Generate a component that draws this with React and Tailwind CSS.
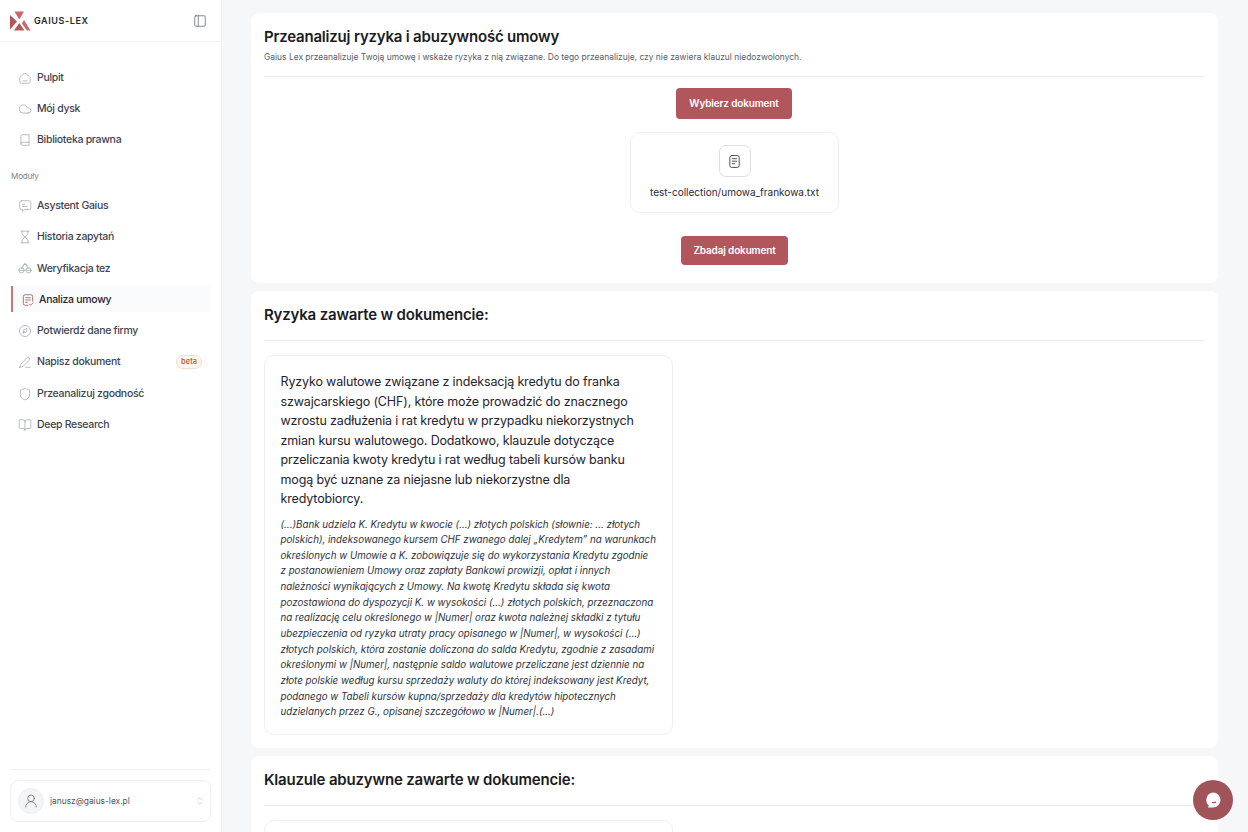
import { Cloud, Hourglass, Shield, BookOpen, PanelLeft, UserRound, ChevronsUpDown } from 'lucide-react';

const font = 'font-["Inter","Liberation_Sans",sans-serif]';

// hand-drawn nav icons, 24 grid like the icon set the app uses
function Svg({ size = 15, strokeWidth = 1.3, className, children }) {
  return (
    <svg width={size} height={size} viewBox="0 0 24 24" fill="none" stroke="currentColor" strokeWidth={strokeWidth} strokeLinecap="round" strokeLinejoin="round" className={className}>
      {children}
    </svg>
  );
}

const HomeIcon = (p) => (
  <Svg {...p}>
    <path d="M3 12.5c0-1.3.6-2.4 1.6-3.2l5-4.3a3.7 3.7 0 0 1 4.8 0l5 4.3c1 .8 1.6 1.9 1.6 3.2V18a3 3 0 0 1-3 3H6a3 3 0 0 1-3-3z" />
    <path d="M8.5 17h7" />
  </Svg>
);
const BookIcon = (p) => (
  <Svg {...p}>
    <path d="M5 18.5V6a3 3 0 0 1 3-3h11v13H7.5a2.5 2.5 0 0 0 0 5H19v-5" />
  </Svg>
);
const ChatIcon = (p) => (
  <Svg {...p}>
    <path d="M6 3h13a3 3 0 0 1 3 3v9a3 3 0 0 1-3 3h-8l-3.5 3.2V18H6a3 3 0 0 1-3-3V6a3 3 0 0 1 3-3z" />
    <path d="M7.5 9h4M7.5 13h8" />
  </Svg>
);
const BikeIcon = (p) => (
  <Svg {...p}>
    <circle cx="6" cy="16" r="4.5" />
    <circle cx="18" cy="16" r="4.5" />
    <path d="M2 16h8M14 16h8M8 7.5l4-3 4 3M6 13l6-8.5L18 13" />
  </Svg>
);
const ContractIcon = (p) => (
  <Svg {...p}>
    <path d="M12 21H7a3 3 0 0 1-3-3V6a3 3 0 0 1 3-3h10a3 3 0 0 1 3 3v8" />
    <path d="M8 8h8M8 12h8M8 16h3M14.5 19l2 2 4-4" />
  </Svg>
);
const CompassIcon = (p) => (
  <Svg {...p}>
    <circle cx="12" cy="12" r="9.5" />
    <path d="M15.5 8.5l-1.5 5.5-5.5 1.5 1.5-5.5zM8.5 15.5l3-3" />
  </Svg>
);
const PenIcon = (p) => (
  <Svg {...p}>
    <path d="M3 21c.5-2.5 1.2-5 2.8-6.6L15.5 4.8a2.8 2.8 0 0 1 4 4L9.7 18.4C8 20 5.5 20.6 3 21z" />
    <path d="M13 21h8" />
  </Svg>
);
const DocIcon = (p) => (
  <Svg {...p}>
    <rect x="4.5" y="2.5" width="15" height="19" rx="3" />
    <path d="M8.5 7.5h7M8.5 11.5h7M8.5 15.5h3.5" />
  </Svg>
);

const topNav = [
  { label: 'Pulpit', icon: HomeIcon },
  { label: 'Mój dysk', icon: Cloud },
  { label: 'Biblioteka prawna', icon: BookIcon },
];

const modules = [
  { label: 'Asystent Gaius', icon: ChatIcon },
  { label: 'Historia zapytań', icon: Hourglass },
  { label: 'Weryfikacja tez', icon: BikeIcon },
  { label: 'Analiza umowy', icon: ContractIcon, active: true },
  { label: 'Potwierdź dane firmy', icon: CompassIcon },
  { label: 'Napisz dokument', icon: PenIcon, badge: 'beta' },
  { label: 'Przeanalizuj zgodność', icon: Shield },
  { label: 'Deep Research', icon: BookOpen },
];

const riskLines = [
  'Ryzyko walutowe związane z indeksacją kredytu do franka',
  'szwajcarskiego (CHF), które może prowadzić do znacznego',
  'wzrostu zadłużenia i rat kredytu w przypadku niekorzystnych',
  'zmian kursu walutowego. Dodatkowo, klauzule dotyczące',
  'przeliczania kwoty kredytu i rat według tabeli kursów banku',
  'mogą być uznane za niejasne lub niekorzystne dla',
  'kredytobiorcy.',
];

const quoteLines = [
  '(...)Bank udziela K. Kredytu w kwocie (...) złotych polskich (słownie: ... złotych',
  'polskich), indeksowanego kursem CHF zwanego dalej „Kredytem” na warunkach',
  'określonych w Umowie a K. zobowiązuje się do wykorzystania Kredytu zgodnie',
  'z postanowieniem Umowy oraz zapłaty Bankowi prowizji, opłat i innych',
  'należności wynikających z Umowy. Na kwotę Kredytu składa się kwota',
  'pozostawiona do dyspozycji K. w wysokości (...) złotych polskich, przeznaczona',
  'na realizację celu określonego w |Numer| oraz kwota należnej składki z tytułu',
  'ubezpieczenia od ryzyka utraty pracy opisanego w |Numer|, w wysokości (...)',
  'złotych polskich, która zostanie doliczona do salda Kredytu, zgodnie z zasadami',
  'określonymi w |Numer|, następnie saldo walutowe przeliczane jest dziennie na',
  'złote polskie według kursu sprzedaży waluty do której indeksowany jest Kredyt,',
  'podanego w Tabeli kursów kupna/sprzedaży dla kredytów hipotecznych',
  'udzielanych przez G., opisanej szczegółowo w |Numer|.(...)',
];

function Logo() {
  return (
    <svg width="21" height="20" viewBox="0 0 21 20">
      <polygon points="4.5,0.5 14,0.5 9.3,8.5" fill="#c9686c" />
      <polygon points="0,4 7,10.5 0,18.5" fill="#b5555b" />
      <polygon points="9.3,12 14.5,19.5 4,19.5" fill="#b35a60" />
      <polygon points="14,9 20.5,19.5 17,19.5 11.8,12.5" fill="#c9686c" />
    </svg>
  );
}

function NavItem({ item }) {
  const Icon = item.icon;
  if (item.active) {
    return (
      <div className="flex items-center h-[26px] pl-[8px] pt-[1px] border-l-2 border-[#c9757b] bg-[#f9fafb] text-[10.5px] tracking-[-0.3px] font-medium text-[#1f2430]">
        <Icon size={14} strokeWidth={1.4} className="text-[#a8545a] mr-[4px]" />
        {item.label}
      </div>
    );
  }
  return (
    <div className="flex items-center h-[26px] pl-[7px] pr-[8px] pt-[1px] text-[10.5px] tracking-[-0.3px] font-medium text-[#3d4452]">
      <Icon size={14} strokeWidth={1.2} className="text-[#9aa0aa] mr-[5px] shrink-0" />
      <span className="flex-1">{item.label}</span>
      {item.badge && (
        <span className="rounded-full border border-[#fbdcc4] bg-[#fff6ee] px-[4px] h-[14px] leading-[12px] tracking-normal text-[7.5px] text-[#c2552b]">{item.badge}</span>
      )}
    </div>
  );
}

function Sidebar() {
  return (
    <aside className="w-[222px] h-[832px] shrink-0 bg-white border-r border-[#eff1f4] flex flex-col">
      <div className="h-[42px] border-b border-[#f1f2f4] flex items-center pl-[10px] pr-[14px]">
        <Logo />
        <span className="ml-[3px] text-[9px] font-semibold tracking-[0.6px] text-[#25272c]">GAIUS-LEX</span>
        <PanelLeft size={14} strokeWidth={1.2} className="ml-auto text-[#555b66]" />
      </div>
      <nav className="px-[11px] pt-[22px] flex flex-col gap-[5.2px]">
        {topNav.map((item) => <NavItem key={item.label} item={item} />)}
      </nav>
      <div className="px-[11px] mt-[18px] mb-[10px] text-[8px] tracking-[-0.1px] text-[#7a808a]">Moduły</div>
      <nav className="px-[11px] flex flex-col gap-[5.3px]">
        {modules.map((item) => <NavItem key={item.label} item={item} />)}
      </nav>
      <div className="mt-auto mx-[10px] border-t border-[#f0f1f3] pt-[10px] pb-[10px]">
        <div className="h-[42px] rounded-[8px] border border-[#eff0f2] flex items-center pl-[7px] pr-[5px]">
          <div className="w-[26px] h-[26px] rounded-full bg-[#f3f4f6] border border-[#eceef0] flex items-center justify-center">
            <UserRound size={16} strokeWidth={1.2} className="text-[#6b7280]" />
          </div>
          <span className="ml-[6px] text-[8.4px] text-[#4b5563]">janusz@gaius-lex.pl</span>
          <ChevronsUpDown size={10} strokeWidth={1.2} className="ml-auto text-[#9ca3af]" />
        </div>
      </div>
    </aside>
  );
}

function Heading({ children }) {
  return (
    <div className="h-[50px] mx-[13px] border-b border-[#e9ebee] pt-[14px]">
      <h2 className="text-[15px] leading-[20px] tracking-[-0.18px] font-semibold text-[#191c22]">{children}</h2>
    </div>
  );
}

function Main() {
  return (
    <main className="flex-1 h-[832px] overflow-hidden bg-[#f6f7f9] pt-[13px] pl-[29px] pr-[30px] flex flex-col gap-[8px]">
      <section className="h-[270px] shrink-0 bg-white rounded-[8px] flex flex-col items-center">
        <div className="self-stretch h-[64px] mx-[13px] border-b border-[#e9ebee] pt-[14px]">
          <h1 className="text-[15px] leading-[20px] tracking-[-0.2px] font-semibold text-[#191c22]">Przeanalizuj ryzyka i abuzywność umowy</h1>
          <p className="text-[8.45px] leading-[12px] mt-[4px] text-[#565d6b]">Gaius Lex przeanalizuje Twoją umowę i wskaże ryzyka z nią związane. Do tego przeanalizuje, czy nie zawiera klauzul niedozwolonych.</p>
        </div>
        <button className="mt-[11px] mr-[1px] w-[116px] h-[31px] rounded-[4px] bg-[#b1565b] text-white text-[10px] tracking-[-0.15px] font-semibold">Wybierz dokument</button>
        <div className="mt-[13px] w-[209px] h-[81px] rounded-[10px] border border-[#f0f1f3] flex flex-col items-center pt-[12px]">
          <div className="w-[32px] h-[32px] rounded-[7px] border-[1.5px] border-[#dcdee2] flex items-center justify-center">
            <DocIcon size={15} strokeWidth={1.6} className="text-[#4b5563]" />
          </div>
          <span className="mt-[8px] text-[10px] text-[#1f2937]">test-collection/umowa_frankowa.txt</span>
        </div>
        <button className="mt-[23px] w-[107px] h-[29px] rounded-[4px] bg-[#b1565b] text-white text-[10px] tracking-[-0.15px] font-semibold">Zbadaj dokument</button>
      </section>

      <section className="h-[457px] shrink-0 bg-white rounded-[8px]">
        <Heading>Ryzyka zawarte w dokumencie:</Heading>
        <div className="ml-[12.5px] mt-[14px] w-[409.5px] h-[380px] rounded-[10px] border border-[#eff0f2] pl-[16px] pr-[10px] pt-[16px] whitespace-nowrap">
          <p className="text-[12.5px] leading-[19.5px] tracking-[-0.15px] text-[#1f2430]">
            {riskLines.map((line) => <span key={line} className="block">{line}</span>)}
          </p>
          <p className="mt-[8px] text-[9.75px] leading-[15.65px] italic text-[#2a3140]">
            {quoteLines.map((line) => <span key={line} className="block">{line}</span>)}
          </p>
        </div>
      </section>

      <section className="flex-1 bg-white rounded-t-[8px]">
        <Heading>Klauzule abuzywne zawarte w dokumencie:</Heading>
        <div className="ml-[12.5px] mt-[14px] w-[409.5px] h-[40px] rounded-t-[10px] border border-[#eff0f2]" />
      </section>
    </main>
  );
}

export default function App() {
  return (
    <div className={`relative w-[1248px] h-[832px] overflow-hidden flex ${font}`}>
      <Sidebar />
      <Main />
      <div className="absolute left-[1193px] top-[780px] w-[40px] h-[40px] rounded-full bg-[#a0545a] flex items-center justify-center">
        <svg width="20" height="20" viewBox="0 0 20 20">
          <path d="M10 2.5a7.5 7.5 0 0 1 0 15H5l.8-2A7.5 7.5 0 0 1 10 2.5z" fill="#fff" />
          <path d="M9.5 12.6c1.2.2 2.2 0 3.3-.5" stroke="#a0545a" strokeWidth="1.2" fill="none" strokeLinecap="round" />
        </svg>
      </div>
    </div>
  );
}
